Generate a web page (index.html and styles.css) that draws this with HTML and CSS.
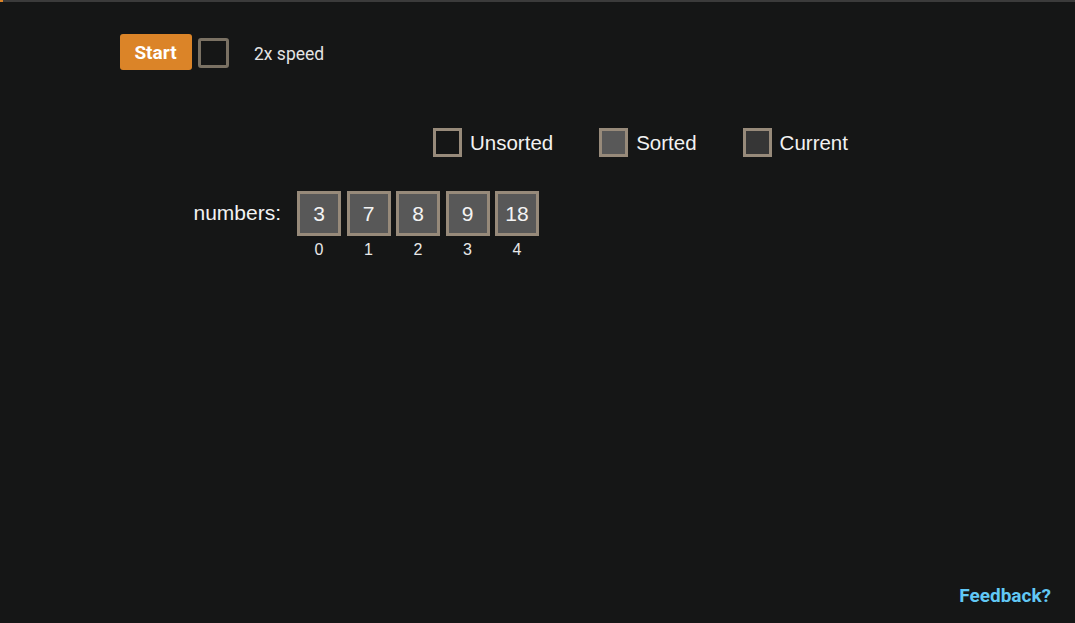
FILE: index.html
```html
<!DOCTYPE html>
<html>
<head>
<meta charset="utf-8">
<link rel="stylesheet" href="styles.css">
</head>
<body>
<div class="topbar"><div class="progress"></div></div>
<div class="controls">
  <button class="start">Start</button>
  <span class="check"></span>
  <span class="speed">2x speed</span>
</div>
<div class="legend">
  <div class="item"><span class="swatch unsorted"></span><span>Unsorted</span></div>
  <div class="item"><span class="swatch sorted"></span><span>Sorted</span></div>
  <div class="item"><span class="swatch current"></span><span>Current</span></div>
</div>
<div class="array">
  <div class="label">numbers:</div>
  <div class="cells">
    <div class="cell"><div class="box">3</div><div class="idx">0</div></div>
    <div class="cell"><div class="box">7</div><div class="idx">1</div></div>
    <div class="cell"><div class="box">8</div><div class="idx">2</div></div>
    <div class="cell"><div class="box">9</div><div class="idx">3</div></div>
    <div class="cell"><div class="box">18</div><div class="idx">4</div></div>
  </div>
</div>
<a class="feedback" href="#">Feedback?</a>
</body>
</html>
```
FILE: styles.css
```css
html, body {
  margin: 0;
  padding: 0;
  height: 100%;
  background: #151616;
  overflow: hidden;
}
body {
  position: relative;
  font-family: "Liberation Sans", Arial, sans-serif;
  color: #f2f2f2;
}
.topbar {
  height: 2px;
  background: #3b3b3b;
}
.progress {
  width: 3px;
  height: 2px;
  background: #db8428;
}
.controls {
  display: flex;
  align-items: center;
  margin: 32px 0 0 120px;
  height: 36px;
}
.start {
  width: 72px;
  height: 36px;
  border: none;
  border-radius: 3px;
  background: #db8428;
  color: #fff;
  font-family: Roboto, sans-serif;
  font-weight: 700;
  font-size: 19px;
  padding: 0 1px 0 0;
  margin: 0;
  line-height: 37px;
}
.check {
  box-sizing: border-box;
  width: 31px;
  height: 30px;
  border: 3px solid #7a7163;
  border-radius: 3px;
  margin-left: 6px;
  margin-top: 1px;
}
.speed {
  font-family: Roboto, sans-serif;
  font-size: 17.5px;
  color: #e4e4e4;
  margin-left: 25px;
  margin-top: 4px;
}
.legend {
  display: flex;
  align-items: center;
  margin: 58px 0 0 433px;
  height: 29px;
  font-size: 20.5px;
}
.item {
  display: flex;
  align-items: center;
  gap: 8px;
  margin-right: 46px;
}
.swatch {
  box-sizing: border-box;
  width: 29px;
  height: 29px;
  border: 3px solid #978a7a;
}
.unsorted { background: #151616; }
.sorted { background: #585858; }
.current { background: #363636; }
.array {
  display: flex;
  align-items: flex-start;
  margin: 34px 0 0 0;
}
.label {
  width: 281px;
  text-align: right;
  font-size: 21px;
  line-height: 44px;
}
.cells {
  display: flex;
  gap: 5.5px;
  margin-left: 16px;
}
.cell {
  display: flex;
  flex-direction: column;
  align-items: center;
}
.box {
  box-sizing: border-box;
  width: 44px;
  height: 45px;
  border: 3px solid #978a7a;
  background: #585858;
  font-size: 21px;
  line-height: 39px;
  text-align: center;
  color: #f4f4f4;
}
.idx {
  font-size: 16px;
  margin-top: 5px;
  color: #e8e8e8;
}
.feedback {
  position: absolute;
  right: 24px;
  bottom: 16px;
  font-family: Roboto, sans-serif;
  font-weight: 700;
  font-size: 19px;
  color: #61c8f5;
  text-decoration: none;
}
```
